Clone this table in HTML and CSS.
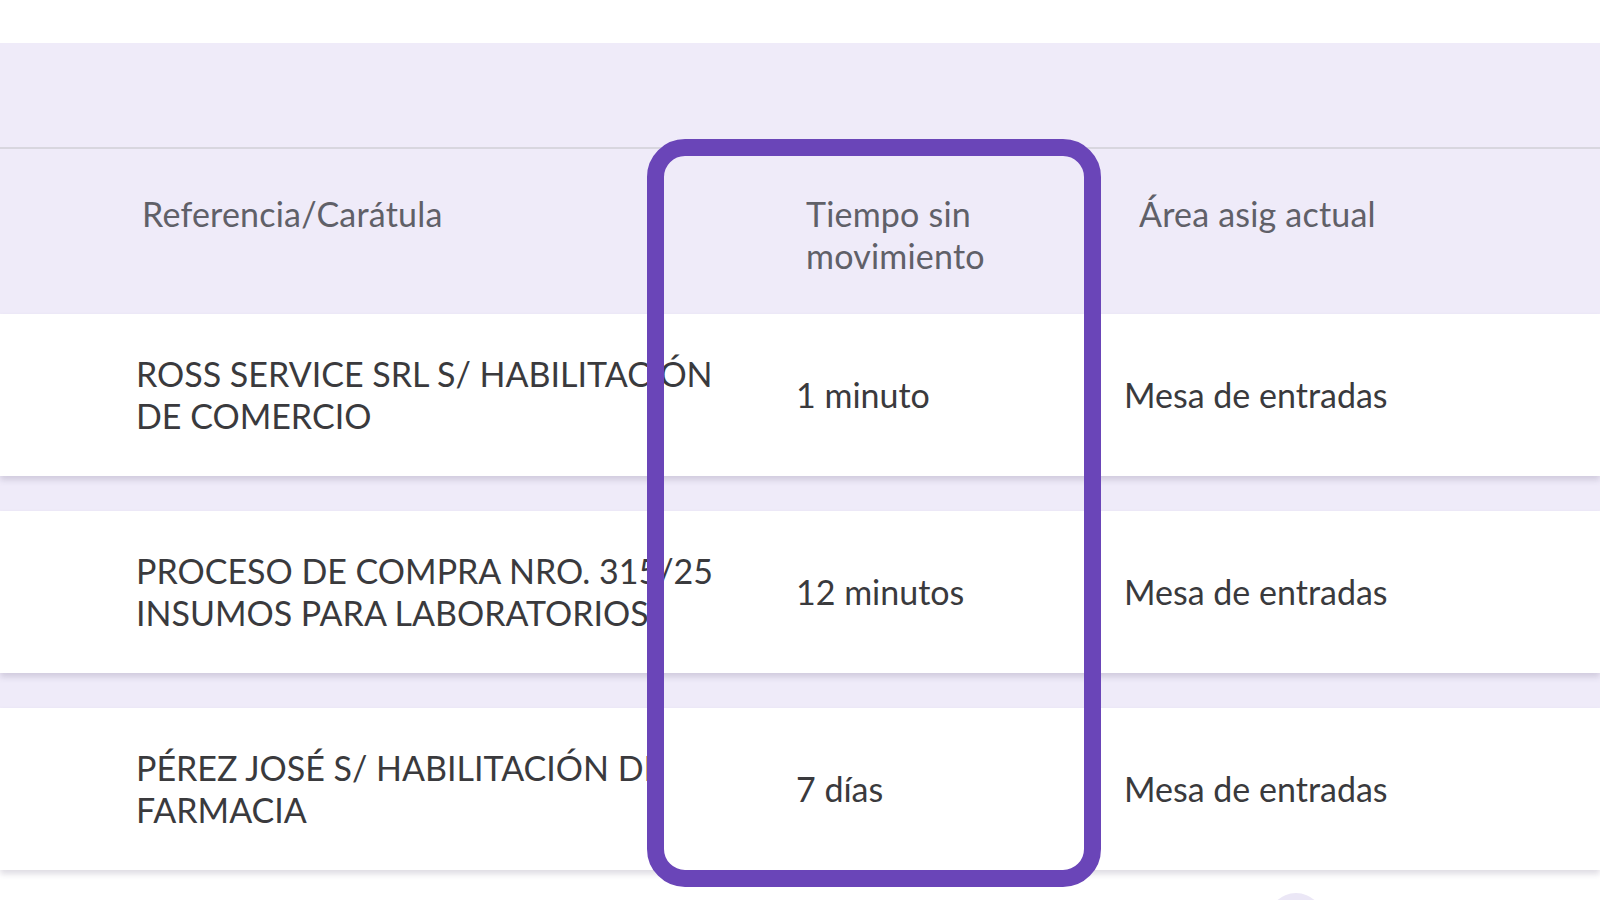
FILE: index.html
```html
<!DOCTYPE html>
<html lang="es">
<head>
<meta charset="utf-8">
<title>Expedientes</title>
<link rel="stylesheet" href="styles.css">
</head>
<body>
<div class="page">
  <section class="panel">
    <div class="toolbar"></div>
    <div class="thead">
      <div class="th th-ref">Referencia/Carátula</div>
      <div class="th th-time">Tiempo sin<br>movimiento</div>
      <div class="th th-area">Área asig actual</div>
    </div>
    <div class="tbody">
      <div class="row">
        <div class="td td-ref">ROSS SERVICE SRL S/ HABILITACIÓN DE COMERCIO</div>
        <div class="td td-time">1 minuto</div>
        <div class="td td-area">Mesa de entradas</div>
      </div>
      <div class="row">
        <div class="td td-ref">PROCESO DE COMPRA NRO. 315/25 INSUMOS PARA LABORATORIOS</div>
        <div class="td td-time">12 minutos</div>
        <div class="td td-area">Mesa de entradas</div>
      </div>
      <div class="row">
        <div class="td td-ref">PÉREZ JOSÉ S/ HABILITACIÓN DE FARMACIA</div>
        <div class="td td-time">7 días</div>
        <div class="td td-area">Mesa de entradas</div>
      </div>
    </div>
  </section>
  <div class="highlight"></div>
  <div class="fab"></div>
</div>
</body>
</html>
```

FILE: styles.css
```css
* { box-sizing: border-box; }
html, body {
  margin: 0;
  padding: 0;
  background: #ffffff;
  overflow: hidden;
}
body {
  font-family: Lato, "Open Sans", "Liberation Sans", sans-serif;
  width: 1600px;
  height: 900px;
}
.page {
  position: relative;
  width: 1600px;
  height: 900px;
  padding-top: 43px;
  overflow: hidden;
}
.panel {
  background: #efebf9;
}
.toolbar {
  height: 106px;
  border-bottom: 2px solid #d8d6df;
}
.thead {
  display: grid;
  grid-template-columns: 796px 328px 1fr;
  height: 165px;
  padding-top: 44px;
  font-size: 34px;
  line-height: 42px;
  letter-spacing: 0.2px;
  color: #606068;
}
.th-ref { padding-left: 142px; }
.th-time { padding-left: 10px; padding-right: 30px; }
.th-area { padding-left: 15px; }
.tbody {
  display: flex;
  flex-direction: column;
  gap: 35px;
}
.row {
  display: grid;
  grid-template-columns: 796px 328px 1fr;
  align-items: center;
  height: 162px;
  background: #ffffff;
  box-shadow: 0 4px 6px rgba(70, 60, 100, 0.18);
  font-size: 34px;
  line-height: 42px;
  color: #3a3a3d;
}
.td-ref {
  padding-left: 136px;
  padding-right: 50px;
}
.highlight {
  position: absolute;
  left: 647px;
  top: 139px;
  width: 454px;
  height: 748px;
  border: 17px solid #6a45b8;
  border-radius: 38px;
  pointer-events: none;
}
.fab {
  position: absolute;
  left: 1268px;
  top: 893px;
  width: 56px;
  height: 56px;
  border-radius: 50%;
  background: #ebe7f6;
}
```
